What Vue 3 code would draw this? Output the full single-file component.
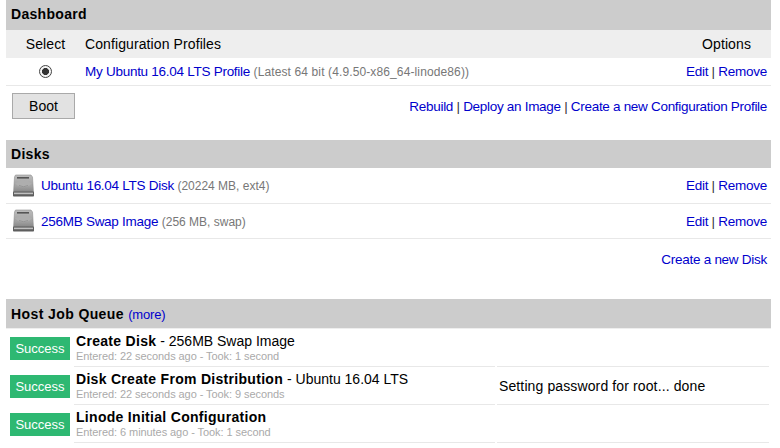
<script setup>
const disks = [
  { name: 'Ubuntu 16.04 LTS Disk', info: '(20224 MB, ext4)' },
  { name: '256MB Swap Image', info: '(256 MB, swap)' },
]
const jobs = [
  { title: 'Create Disk', sub: ' - 256MB Swap Image', meta: 'Entered: 22 seconds ago - Took: 1 second', msg: '' },
  { title: 'Disk Create From Distribution', sub: ' - Ubuntu 16.04 LTS', meta: 'Entered: 22 seconds ago - Took: 9 seconds', msg: 'Setting password for root... done' },
  { title: 'Linode Initial Configuration', sub: '', meta: 'Entered: 6 minutes ago - Took: 1 second', msg: '' },
]
</script>

<template>
  <div class="page">
    <h2 class="head dash">Dashboard</h2>
    <div class="cols">
      <span class="c-sel">Select</span>
      <span class="c-main">Configuration Profiles</span>
      <span class="c-opt">Options</span>
    </div>
    <div class="profile">
      <span class="c-sel"><span class="radio"></span></span>
      <span class="c-main"><a>My Ubuntu 16.04 LTS Profile</a> <small class="wide">(Latest 64 bit (4.9.50-x86_64-linode86))</small></span>
      <span class="links"><a>Edit</a> | <a>Remove</a></span>
    </div>
    <div class="actions">
      <button class="boot">Boot</button>
      <span class="links tight"><a>Rebuild</a> | <a>Deploy an Image</a> | <a>Create a new Configuration Profile</a></span>
    </div>

    <h2 class="head disks">Disks</h2>
    <div v-for="d in disks" :key="d.name" class="disk">
      <svg class="hdd" width="24" height="24" viewBox="0 0 24 24">
        <defs>
          <linearGradient id="hddg" x1="0" y1="0" x2="0" y2="1">
            <stop offset="0" stop-color="#bcbcbc" />
            <stop offset="0.65" stop-color="#a0a0a0" />
            <stop offset="1" stop-color="#828282" />
          </linearGradient>
        </defs>
        <path d="M3.5 1h15.5l1.5 2 1 16H1.5l1-16z" fill="url(#hddg)" stroke="#8f8f8f" stroke-width=".6" />
        <rect x="5" y="3" width="12" height="1.6" fill="#555" />
        <path d="M3 9.5Q11.5 3 20 9.5 11.5 17 3 9.5z" fill="#aeaeae" />
        <path d="M7 11.5q4.5 2.5 9 0" fill="none" stroke="#8e8e8e" stroke-width=".8" />
        <rect x="1" y="17.6" width="21" height="5" rx=".8" fill="#5e5e5e" />
        <rect x="2" y="18.6" width="19" height="1.6" fill="#c0c0c0" />
      </svg>
      <span class="d-name"><a>{{ d.name }}</a> <small>{{ d.info }}</small></span>
      <span class="links"><a>Edit</a> | <a>Remove</a></span>
    </div>
    <div class="newdisk"><a>Create a new Disk</a></div>

    <h2 class="head queue">Host Job Queue <a class="more">(more)</a></h2>
    <div v-for="j in jobs" :key="j.title" class="job">
      <div class="status"><span class="badge">Success</span></div>
      <div class="detail">
        <div class="title"><b>{{ j.title }}</b>{{ j.sub }}</div>
        <div class="meta">{{ j.meta }}</div>
      </div>
      <div class="msg">{{ j.msg }}</div>
    </div>
  </div>
</template>

<style>
html, body { margin: 0; background: #fff; }
</style>

<style scoped>
.page {
  width: 765px;
  margin-left: 6px;
  font-family: "Liberation Sans", Arial, sans-serif;
  font-size: 13.5px;
  letter-spacing: -.27px;
  color: #000;
  line-height: 16px;
}
a { color: #0000cc; }
small { font-size: 12px; color: #777; letter-spacing: 0; }
small.wide { letter-spacing: .12px; }
.head {
  margin: 0;
  background: #ccc;
  font-size: 14px;
  font-weight: 700;
  padding: 6px 5px;
  letter-spacing: .3px;
}
.dash { height: 18px; }
.disks { height: 16px; margin-top: 21px; }
.queue { height: 16px; margin-top: 29px; padding: 7px 5px 6px; border-bottom: 1px solid #eee; letter-spacing: .4px; }
.more { font-weight: 400; font-size: 13px; letter-spacing: -.2px; }
.cols { display: flex; align-items: center; height: 28px; background: #eee; font-size: 14px; letter-spacing: .1px; }
.c-sel { width: 79px; text-align: center; flex: none; }
.c-main { flex: 1; }
.c-opt { padding-right: 20px; }
.profile { display: flex; align-items: center; height: 27px; border-bottom: 1px solid #e8e8e8; }
.profile .c-main, .profile .links { padding-top: 1px; }
.radio {
  display: inline-block;
  box-sizing: border-box;
  width: 13px;
  height: 13px;
  border: 1px solid #444;
  border-radius: 50%;
  background: radial-gradient(circle, #333 0 3.2px, #f4f4f4 3.8px);
  vertical-align: middle;
}
.links { padding-right: 4px; color: #333; }
.tight { letter-spacing: -.3px; padding-top: 1px; }
.actions {
  display: flex;
  justify-content: space-between;
  align-items: center;
  height: 26px;
  padding: 7px 0 0 6px;
  margin-bottom: 1px;
}
.boot {
  width: 63px;
  height: 26px;
  box-sizing: border-box;
  border: 1px solid #a9a9a9;
  background: #e2e2e2;
  font: 14px "Liberation Sans", Arial, sans-serif;
  color: #000;
  padding: 0;
}
.disk { display: flex; align-items: center; height: 34px; border-bottom: 1px solid #e8e8e8; }
.disks + .disk { height: 35px; }
.hdd { margin-left: 6px; margin-right: 5px; flex: none; }
.d-name { flex: 1; padding-top: 1px; }
.disk .links { padding-top: 1px; }
.newdisk { text-align: right; padding: 13px 4px 0 0; height: 18px; }
.job { display: flex; height: 38px; }
.status { width: 68px; flex: none; padding-top: 8px; padding-left: 4px; box-sizing: border-box; }
.badge {
  display: block;
  width: 60px;
  height: 23px;
  line-height: 23px;
  text-align: center;
  background: #2eb872;
  color: #fff;
  font-size: 13px;
  letter-spacing: 0;
}
.detail { width: 421px; flex: none; box-sizing: border-box; border-bottom: 1px solid #e8e8e8; padding: 4px 0 0 2px; font-size: 14px; letter-spacing: 0; }
.title { line-height: 16px; }
.title b { letter-spacing: .3px; }
.meta { font-size: 11px; color: #aaa; line-height: 14px; letter-spacing: -.07px; }
.msg { width: 272px; margin-left: 2px; flex: none; box-sizing: border-box; border-bottom: 1px solid #e8e8e8; padding: 11px 0 0 2px; font-size: 14px; letter-spacing: .12px; }
</style>
